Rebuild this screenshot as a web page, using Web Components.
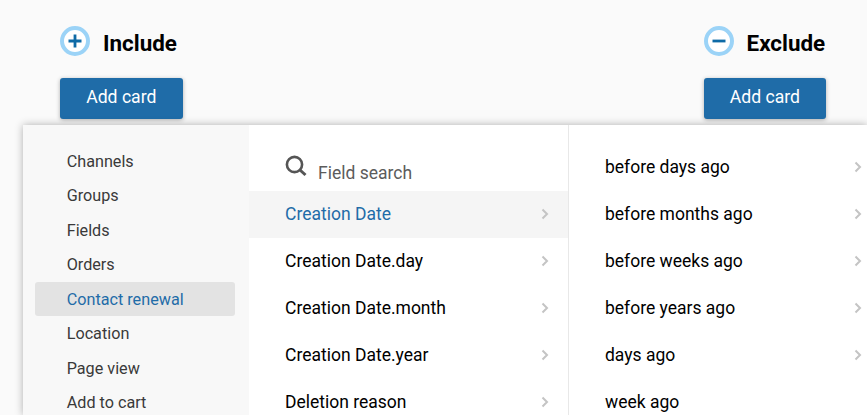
<!DOCTYPE html>
<html>
<head>
<meta charset="utf-8">
<title>Segment</title>
<style>
html, body { margin: 0; height: 100%; overflow: hidden; }
body { background: #fafafa; font-family: Roboto, "Liberation Sans", sans-serif; }
</style>
</head>
<body>
<segment-page>
  <filter-head slot="heads" kind="include">Include</filter-head>
  <filter-head slot="heads" kind="exclude">Exclude</filter-head>
  <card-menu slot="menu">
    <side-item>Channels</side-item>
    <side-item>Groups</side-item>
    <side-item>Fields</side-item>
    <side-item>Orders</side-item>
    <side-item active>Contact renewal</side-item>
    <side-item>Location</side-item>
    <side-item>Page view</side-item>
    <side-item>Add to cart</side-item>
    <field-search slot="fields"></field-search>
    <field-row slot="fields" active>Creation Date</field-row>
    <field-row slot="fields">Creation Date.day</field-row>
    <field-row slot="fields">Creation Date.month</field-row>
    <field-row slot="fields">Creation Date.year</field-row>
    <field-row slot="fields">Deletion reason</field-row>
    <field-row slot="ops">before days ago</field-row>
    <field-row slot="ops">before months ago</field-row>
    <field-row slot="ops">before weeks ago</field-row>
    <field-row slot="ops">before years ago</field-row>
    <field-row slot="ops">days ago</field-row>
    <field-row slot="ops" plain>week ago</field-row>
  </card-menu>
</segment-page>

<script>
class SegmentPage extends HTMLElement {
    connectedCallback() {
        this.attachShadow({ mode: 'open' });
        this.shadowRoot.innerHTML = `
            <style>
                :host { display: block; position: relative; height: 415px; overflow: hidden; }
                .heads {
                    display: grid;
                    grid-template-columns: 643.6px 1fr;
                    padding: 26px 0 0 60px;
                }
                .menu { position: absolute; left: 23px; top: 125px; }
            </style>
            <div class="heads"><slot name="heads"></slot></div>
            <div class="menu"><slot name="menu"></slot></div>
        `;
    }
}

class FilterHead extends HTMLElement {
    connectedCallback() {
        const minus = this.getAttribute('kind') === 'exclude';
        this.attachShadow({ mode: 'open' });
        this.shadowRoot.innerHTML = `
            <style>
                :host { display: block; }
                .title { display: flex; align-items: flex-start; gap: 13px; height: 30px; }
                svg { display: block; flex: none; }
                h3 { margin: 2px 0 0; font: 700 22.4px/30px Roboto, sans-serif; color: #000; }
                button {
                    display: block;
                    box-sizing: border-box;
                    width: 122.6px;
                    height: 41px;
                    margin-top: 22px;
                    border: 0;
                    padding: 0 0 3px;
                    border-radius: 3px;
                    background: #1f6ca8;
                    color: #fff;
                    font: 400 17.6px Roboto, sans-serif;
                    box-shadow: 0 1px 4px rgba(0, 0, 0, .3);
                }
            </style>
            <div class="title">
                <svg width="30" height="30" viewBox="0 0 30 30">
                    <circle cx="15" cy="15" r="13" fill="#fff" stroke="#9bd3f7" stroke-width="4"/>
                    <path d="${minus ? 'M8.5 15h13' : 'M8.5 15h13M15 8.5v13'}" stroke="#0e6aa6" stroke-width="2.8" fill="none"/>
                </svg>
                <h3><slot></slot></h3>
            </div>
            <button>Add card</button>
        `;
    }
}

class CardMenu extends HTMLElement {
    connectedCallback() {
        this.attachShadow({ mode: 'open' });
        this.shadowRoot.innerHTML = `
            <style>
                :host {
                    display: grid;
                    grid-template-columns: 226px 320px 298px;
                    width: 844px;
                    height: 290px;
                    background: #fff;
                    box-shadow: 0 0 8px rgba(0, 0, 0, .3);
                }
                .side { background: #f8f8f8; padding: 19px 14px 0 12px; overflow: hidden; }
                .fields { border-right: 1px solid #e8e8e8; overflow: hidden; }
                .ops { padding-top: 19px; overflow: hidden; }
            </style>
            <div class="side"><slot></slot></div>
            <div class="fields"><slot name="fields"></slot></div>
            <div class="ops"><slot name="ops"></slot></div>
        `;
    }
}

class SideItem extends HTMLElement {
    connectedCallback() {
        const active = this.hasAttribute('active');
        this.attachShadow({ mode: 'open' });
        this.shadowRoot.innerHTML = `
            <style>
                :host {
                    display: block;
                    height: 34.45px;
                    padding-left: 31.7px;
                    border-radius: 3px;
                    font: 400 16.2px/36px Roboto, sans-serif;
                    color: ${active ? '#1f6ca8' : '#3a3a3a'};
                    background: ${active ? '#e3e3e3' : 'transparent'};
                }
            </style>
            <slot></slot>
        `;
    }
}

class FieldSearch extends HTMLElement {
    connectedCallback() {
        this.attachShadow({ mode: 'open' });
        this.shadowRoot.innerHTML = `
            <style>
                :host {
                    display: flex;
                    gap: 11px;
                    height: 66px;
                    box-sizing: border-box;
                    padding: 29px 0 0 36px;
                    color: #5c5c5c;
                    font: 400 17.5px/37px Roboto, sans-serif;
                }
                svg { display: block; flex: none; margin-top: 1px; }
                span { margin-top: 0.5px; }
            </style>
            <svg width="22" height="22" viewBox="0 0 22 22">
                <circle cx="9.5" cy="9.5" r="7.6" fill="none" stroke="#555" stroke-width="2.6"/>
                <path d="M15 15l5.5 5" stroke="#555" stroke-width="3" fill="none"/>
            </svg>
            <span>Field search</span>
        `;
    }
}

class FieldRow extends HTMLElement {
    connectedCallback() {
        const active = this.hasAttribute('active');
        const plain = this.hasAttribute('plain');
        const inOps = this.getAttribute('slot') === 'ops';
        this.attachShadow({ mode: 'open' });
        this.shadowRoot.innerHTML = `
            <style>
                :host {
                    display: flex;
                    align-items: center;
                    justify-content: space-between;
                    height: 47px;
                    padding: 0 ${inOps ? 5 : 19}px 0 36px;
                    font: 400 17.5px Roboto, sans-serif;
                    color: ${active ? '#1f6ca8' : '#000'};
                    background: ${active ? '#f5f5f5' : 'transparent'};
                }
                span { margin-top: -2px; }
                svg { display: block; flex: none; margin-top: -1px; }
            </style>
            <span><slot></slot></span>
            ${plain ? '' : `<svg width="8" height="12" viewBox="0 0 8 12"><path d="M1.5 1.5L6 6l-4.5 4.5" fill="none" stroke="#c4c4c4" stroke-width="2"/></svg>`}
        `;
    }
}

customElements.define('segment-page', SegmentPage);
customElements.define('filter-head', FilterHead);
customElements.define('card-menu', CardMenu);
customElements.define('side-item', SideItem);
customElements.define('field-search', FieldSearch);
customElements.define('field-row', FieldRow);
</script>
</body>
</html>
